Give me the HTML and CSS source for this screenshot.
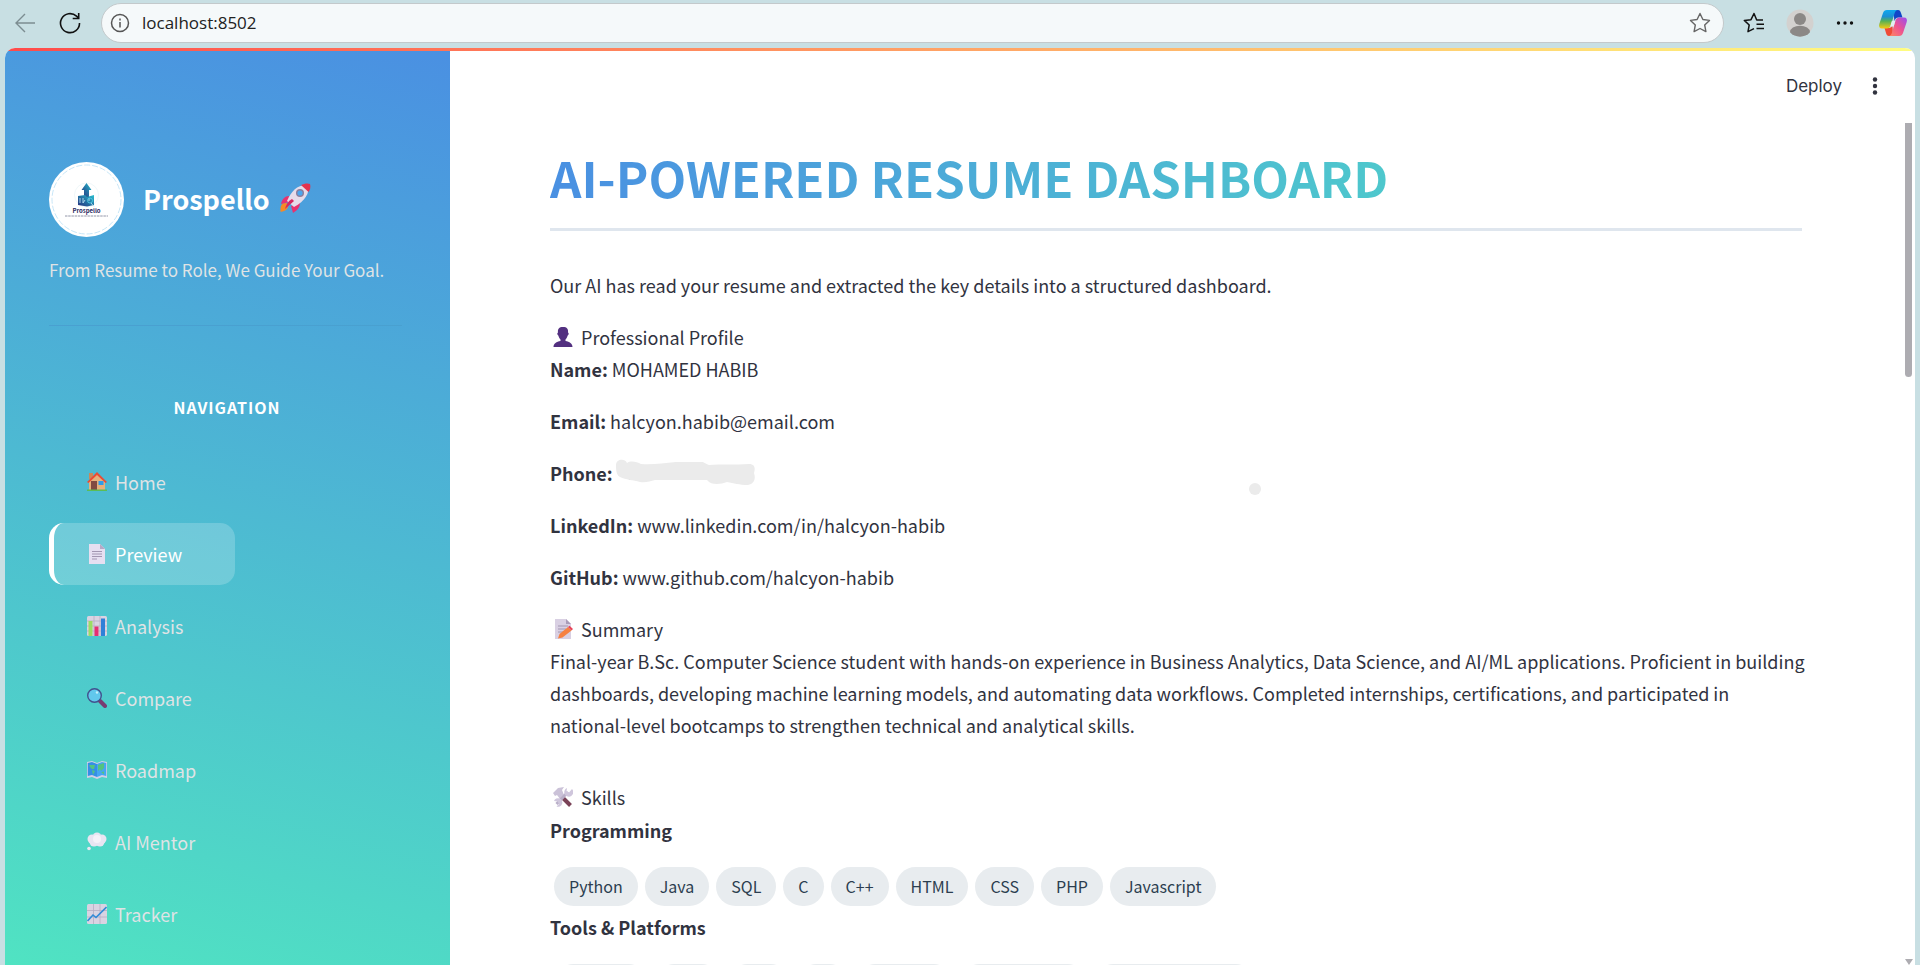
FILE: index.html
```html
<!DOCTYPE html>
<html lang="en">
<head>
<meta charset="utf-8">
<title>Prospello</title>
<link rel="stylesheet" href="styles.css">
</head>
<body>
<div class="browser-bar">
  <button class="tool" type="button" aria-label="Back">
    <svg width="22" height="22" viewBox="0 0 22 22" fill="none" stroke="#7c8d91" stroke-width="1.4"><path d="M21 11H2M11 2L2 11l9 9"/></svg>
  </button>
  <button class="tool" type="button" aria-label="Refresh">
    <svg width="22" height="22" viewBox="0 0 22 22" fill="none" stroke="#111" stroke-width="1.6"><path d="M20.5 11A9.5 9.5 0 1 1 17.5 4.200L19.500 6M19.700 1v5.500h-6"/></svg>
  </button>
  <div class="address">
    <svg width="20" height="20" viewBox="0 0 20 20" fill="none" stroke="#555" stroke-width="1.5"><circle cx="10" cy="10" r="8.500"/><path d="M10 9v5.500M10 5.500v2"/></svg>
    <input class="address-input" type="text" aria-label="Address" value="localhost:8502">
    <button class="star" type="button" aria-label="Add to favorites">
      <svg width="22" height="22" viewBox="0 0 22 22" fill="none" stroke="#666" stroke-width="1.400" stroke-linejoin="round"><path d="M11 1.500l2.900 6 6.600.900-4.800 4.600 1.200 6.600-5.900-3.100-5.900 3.100 1.200-6.600L1.500 8.400l6.600-.9z"/></svg>
    </button>
  </div>
  <div class="browser-tools">
    <button class="tool" type="button" aria-label="Favorites">
      <svg width="22" height="22" viewBox="0 0 22 22" fill="none" stroke="#111" stroke-width="1.500" stroke-linejoin="round"><path d="M20 8h-6.300L11 1.500 8 7.700l-6.700.7 4.900 4.600L5 19.700l6-3M13.500 12.300H21M13.500 16.500H21"/></svg>
    </button>
    <button class="tool" type="button" aria-label="Account">
      <svg width="28" height="28" viewBox="0 0 28 28"><circle cx="14" cy="14" r="13.500" fill="#d3d1cf"/><circle cx="14" cy="10" r="6" fill="#8b8886"/><path d="M4 23.200a10 6.500 0 0 1 20 0 13.500 13.500 0 0 1-20 0z" fill="#8b8886"/></svg>
    </button>
    <button class="tool" type="button" aria-label="Settings">
      <svg width="20" height="20" viewBox="0 0 20 20" fill="#111"><circle cx="3.500" cy="10" r="1.700"/><circle cx="10" cy="10" r="1.700"/><circle cx="16.500" cy="10" r="1.700"/></svg>
    </button>
    <button class="tool" type="button" aria-label="Copilot">
      <svg width="30" height="28" viewBox="0 0 30 28">
        <defs>
          <linearGradient id="cpA" x1="0" y1="0" x2="0" y2="1"><stop offset="0" stop-color="#0fa8ee"/><stop offset=".35" stop-color="#1d8fd4"/><stop offset=".6" stop-color="#56b155"/><stop offset="1" stop-color="#f6cb12"/></linearGradient>
          <linearGradient id="cpB" x1="1" y1="0" x2="0" y2="1"><stop offset="0" stop-color="#9a4df0"/><stop offset=".5" stop-color="#ee5390"/><stop offset="1" stop-color="#ff8a5c"/></linearGradient>
        </defs>
        <path d="M15 1h5c2 0 2.500 1.500 3 3l1.500 4.500h-4c-2.500 0-3.300 1.500-4 3.500z" fill="#1145c8"/>
        <path d="M15 27h-4c-2 0-2.600-1.500-3-3l-1.500-5h4c2.500 0 3.500-1.500 4-3z" fill="#ef4b36"/>
        <path d="M9 1h11c-2 0-2.800 1.200-3.500 3.500L13 16c-.7 2.300-2 3.500-4.500 3.500H4c-2.500 0-3.500-2-2.700-4.500L5 4c.7-2 1.800-3 4-3z" fill="url(#cpA)"/>
        <path d="M21 27H10.500c2 0 2.800-1.200 3.500-3.500L17.300 12c.7-2.300 2-3.500 4.500-3.500H26c2.500 0 3.500 2 2.700 4.500L25 24c-.7 2-1.800 3-4 3z" fill="url(#cpB)"/>
        <path d="M13.800 12h3.500l-1.600 5.500h-3.500z" fill="#e3eef2"/>
      </svg>
    </button>
  </div>
</div>

<div class="app">
  <div class="decoration"></div>
  <div class="columns">
    <aside class="sidebar">
      <div class="brand">
        <svg class="brand-logo" viewBox="0 0 75 75" role="img" aria-label="Prospello logo">
          <circle cx="37.500" cy="37.500" r="37.500" fill="#fff"/>
          <circle cx="37.500" cy="37.500" r="34.500" fill="none" stroke="#b9dff5" stroke-width=".800" stroke-dasharray="6 2"/>
          <defs><linearGradient id="lg" x1="0" y1="1" x2="1" y2="0"><stop offset="0" stop-color="#29327f"/><stop offset=".5" stop-color="#2374a5"/><stop offset="1" stop-color="#2ac0d0"/></linearGradient></defs>
          <circle cx="37.500" cy="33" r="12" fill="none" stroke="#e5f2f5" stroke-width=".600"/>
          <path d="M37.500 21l5 7h-2.500v7h-5v-7h-2.500z" fill="url(#lg)"/>
          <path d="M29 34l7-1 2 2 7-2v10l-7 1.500-9-1.500z" fill="url(#lg)"/>
          <path d="M31 36v5M34 36v5l2-3M40 36v3M42 41l3 3.500" stroke="#b8dcf0" stroke-width=".900" fill="none"/>
          <circle cx="41" cy="38.500" r="2.500" fill="none" stroke="#4fc3df" stroke-width="1"/>
          <text x="37.500" y="51" text-anchor="middle" class="logo-name">Prospello</text>
          <path d="M16 54h43" stroke="#777b92" stroke-width=".800" stroke-dasharray="2.500 .7"/>
        </svg>
        <h2 class="brand-name">Prospello</h2>
        <svg class="rocket" width="32" height="32" viewBox="0 0 32 32">
          <path d="M2 24c1-3 4-4 7-2 1 3-1 6-4 7-2 .8-3.500.8-3.500.8S1.300 26 2 24z" fill="#f58a25"/>
          <path d="M10 14c-4 0-7 3-8 8l8-2zM21 20c0 5-2 8-7 11l-2-7z" fill="#e8326f"/>
          <path d="M29 3c2 8-3 16-14 22l-7-6C12 9 19 2 29 3z" fill="#e6dcea"/>
          <path d="M22 3c3-1.500 7-2 9-1 1 3 0 6-1.500 8z" fill="#e5334e"/>
          <path d="M13 17l2 2-9 8c1-4 3-8 7-10z" fill="#d52862"/>
          <circle cx="21" cy="11" r="4" fill="#8b7d9c"/><circle cx="21" cy="11" r="2.600" fill="#4ba6ee"/>
        </svg>
      </div>
      <p class="tagline">From Resume to Role, We Guide Your Goal.</p>
      <hr class="side-rule">
      <h3 class="nav-title">NAVIGATION</h3>
      <nav class="nav">
        <a class="nav-item" href="#home">
          <svg class="emoji" viewBox="0 0 20 20"><path d="M2 1h4v6H2z" fill="#c98a5c"/><path d="M2 9l8-7 8 7v9H2z" fill="#e6b07c"/><path d="M0 10L10 0l10 10-1.500 1L10 3l-8.500 8z" fill="#ea4c35"/><path d="M4 9h6v9H4z" fill="#824a41"/><path d="M11.500 9h5v4h-5z" fill="#2e9cea"/><path d="M0 17.500h20V19H0z" fill="#5bbd55"/></svg>
          Home</a>
        <a class="nav-item active" href="#preview" aria-current="page">
          <svg class="emoji" viewBox="0 0 20 20"><path d="M2 0h11l5 5v15H2z" fill="#e6dff1"/><path d="M13 0l5 5h-5z" fill="#b6a9c6"/><path d="M5 7.500h10M5 10h10M5 12.500h10M5 15h5" stroke="#a296b1"/></svg>
          Preview</a>
        <a class="nav-item" href="#analysis">
          <svg class="emoji" viewBox="0 0 20 20"><rect width="20" height="20" rx="1.500" fill="#d9d3e2"/><path d="M0 5h20M0 10h20M0 15h20M7 0v20M13 0v20" stroke="#b6adc3" stroke-width=".800"/><path d="M1.500 5h4v15h-4z" fill="#9bdc64"/><path d="M7.500 10.500h4V20h-4z" fill="#e62f72"/><path d="M14 2.500h4V20h-4z" fill="#2f80d8"/></svg>
          Analysis</a>
        <a class="nav-item" href="#compare">
          <svg class="emoji" viewBox="0 0 20 20"><path d="M13 13l5 5" stroke="#793b72" stroke-width="4" stroke-linecap="round"/><circle cx="7.500" cy="7.500" r="6.800" fill="#62c8ec" stroke="#42518d" stroke-width="1.400"/><circle cx="10" cy="4.500" r="1.200" fill="#c4f0fb"/></svg>
          Compare</a>
        <a class="nav-item" href="#roadmap">
          <svg class="emoji" viewBox="0 0 20 20"><path d="M0 2l5-1 5 2 5-2 5 1v16l-5-1-5 2-5-2-5 1z" fill="#d2cfe6"/><path d="M.800 3L5 2l5 2v13l-5-2-4.200 1z" fill="#358fe5"/><path d="M10 4l5-2 4.200 1v13L15 15l-5 2z" fill="#45a6f2"/><path d="M2 5l6 0-1 4-2 0-2-2zM5 10l3 1-2 4zM11 5l6-2v5l-3 3-1-2-2 2zM14 12l3-.5v3z" fill="#52c480"/></svg>
          Roadmap</a>
        <a class="nav-item" href="#mentor">
          <svg class="emoji" viewBox="0 0 20 20" fill="#e9e5f2"><circle cx="5" cy="7" r="4.500"/><circle cx="15" cy="7" r="4.500"/><circle cx="10" cy="5" r="4.500"/><circle cx="7" cy="10" r="4.500"/><circle cx="13" cy="10" r="4.500"/><circle cx="2" cy="16.500" r="1.800"/><circle cx="10" cy="7" r="4" fill="#f5f2f9"/></svg>
          AI Mentor</a>
        <a class="nav-item" href="#tracker">
          <svg class="emoji" viewBox="0 0 20 20"><rect width="20" height="20" rx="1.500" fill="#d9d3e2"/><path d="M0 6.500h20M0 13h20M6.500 0v20M13 0v20" stroke="#b6adc3" stroke-width=".800"/><path d="M.500 17L6 11l3 2.500L19.500 3" stroke="#318ad7" stroke-width="1.600" fill="none"/></svg>
          Tracker</a>
      </nav>
    </aside>

    <main class="main">
      <header class="app-header">
        <button class="deploy" type="button">Deploy</button>
        <button class="menu" type="button" aria-label="Main menu">
          <svg width="6" height="20" viewBox="0 0 6 20" fill="#31333f"><circle cx="3" cy="3.500" r="2.200"/><circle cx="3" cy="10" r="2.200"/><circle cx="3" cy="16.500" r="2.200"/></svg>
        </button>
      </header>
      <div class="content">
        <h1 class="title">AI-POWERED RESUME DASHBOARD</h1>
        <p class="para">Our AI has read your resume and extracted the key details into a structured dashboard.</p>
        <h2 class="section">
          <svg class="emoji" viewBox="0 0 20 20"><path d="M10 0c4 0 5.500 2 5 5.500 1 0 1 2.500-.3 3C14 11 13 12 12.500 12.500V14c4 .8 7 2.500 7 6H.5c0-3.500 3-5.200 7-6v-1.500C7 12 6 11 5.300 8.500 4 8 4 5.500 5 5.500 4.500 2 6 0 10 0z" fill="#533080"/></svg>
          Professional Profile</h2>
        <p class="para"><strong>Name:</strong> MOHAMED HABIB</p>
        <p class="para"><strong>Email:</strong> halcyon.habib@email.com</p>
        <p class="para phone"><strong>Phone:</strong>
          <svg width="142" height="28" viewBox="0 0 142 28"><path d="M4 16l2 1M14 20h3M38 20h4" stroke="#555" stroke-width="1.200"/><path d="M1 6C1 0 10-1 12 4c4-3 10-1 14 1 12 1 22-1 35-2h25c4 0 4 2 8 3 12-1 25 0 40-1 7 0 6 6 5 9 2 6 0 11-6 12-9 0-14-2-21-3-6 2-15 4-20-2H40c-5 1-9 3-15 2-7-2-14-2-20-5-4-2-4-8-4-12z" fill="#ebebeb"/></svg>
        </p>
        <p class="para"><strong>LinkedIn:</strong> www.linkedin.com/in/halcyon-habib</p>
        <p class="para"><strong>GitHub:</strong> www.github.com/halcyon-habib</p>
        <h2 class="section">
          <svg class="emoji" viewBox="0 0 20 20"><path d="M2 0h11l5 5v15H2z" fill="#d9d0e3"/><path d="M13 0l5 5h-5z" fill="#a99cb8"/><path d="M5 7h10M5 10h8M5 13h5" stroke="#a296b1"/><path d="M5 19.500l1.500-4.500L15 8l3.500 3.500-9 7z" fill="#f68142"/><path d="M15 8l1.500-1.200L20 10l-1.500 1.500z" fill="#e8455a"/></svg>
          Summary</h2>
        <p class="para summary">Final-year B.Sc. Computer Science student with hands-on experience in Business Analytics, Data Science, and AI/ML applications. Proficient in building dashboards, developing machine learning models, and automating data workflows. Completed internships, certifications, and participated in <span class="keep">national-level</span> bootcamps to strengthen technical and analytical skills.</p>
        <h2 class="section">
          <svg class="emoji" viewBox="0 0 20 20"><path d="M9 10l8.500 8.500" stroke="#7a4257" stroke-width="4"/><path d="M0 6l5-5 6-1-2 3 2 5-4 4-3-4-2 1z" fill="#cbc2d8"/><path d="M3.500 17L15 5" stroke="#b9afc8" stroke-width="3"/><path d="M19 2a4.500 4.500 0 1 1-5-1l-.5 3.500 2.500 1zM1 14a4.300 4.300 0 1 1 2.500 5.500L6 17l-1.500-2.500z" fill="#cfc6dc"/></svg>
          Skills</h2>
        <h3 class="group">Programming</h3>
        <ul class="chips">
          <li class="chip">Python</li><li class="chip">Java</li><li class="chip">SQL</li><li class="chip">C</li><li class="chip">C++</li><li class="chip">HTML</li><li class="chip">CSS</li><li class="chip">PHP</li><li class="chip">Javascript</li>
        </ul>
        <h3 class="group">Tools &amp; Platforms</h3>
        <ul class="chips">
          <li class="chip" style="width:94px"></li><li class="chip" style="width:66px"></li><li class="chip" style="width:62px"></li><li class="chip" style="width:52px"></li><li class="chip" style="width:97px"></li><li class="chip" style="width:127px"></li><li class="chip" style="width:161px"></li>
        </ul>
      </div>
      <span class="smudge"></span>
      <div class="scroll-thumb"></div>
      <div class="scroll-arrow"></div>
    </main>
  </div>
</div>
</body>
</html>
```
FILE: styles.css
```css
* { box-sizing: border-box; }

body {
  margin: 0;
  height: 100vh;
  display: flex;
  flex-direction: column;
  overflow: hidden;
  background: #c8dfe3;
  color: #31333f;
  font-family: "Noto Sans CJK SC", "Noto Sans", sans-serif;
  font-size: 18px;
  line-height: 32px;
}

h1, h2, h3, p, ul { margin: 0; padding: 0; }
button { border: 0; padding: 0; background: none; font: inherit; color: inherit; cursor: pointer; }
svg { display: block; flex: none; }

/* Browser toolbar */
.browser-bar {
  flex: none;
  height: 48px;
  padding: 0 12px 2px 14px;
  display: flex;
  align-items: center;
  gap: 23px;
}
.address {
  flex: 1;
  height: 40px;
  margin-left: -3px;
  padding: 0 12px 0 8px;
  display: flex;
  align-items: center;
  gap: 12px;
  border: 1px solid #c3c9cb;
  border-radius: 20px;
  background: #f5f9fa;
}
.address-input {
  flex: 1;
  min-width: 0;
  border: 0;
  padding: 0;
  outline: 0;
  background: none;
  color: #222;
  font: 17px/24px "Open Sans", sans-serif;
}
.browser-tools { display: flex; align-items: center; gap: 21px; margin-left: -4px; }
.browser-tools .tool:last-child { margin-left: 2px; }

/* App frame */
.app {
  flex: 1;
  min-height: 0;
  margin: 0 5px;
  display: flex;
  flex-direction: column;
  border-radius: 10px 10px 0 0;
  overflow: hidden;
  background: #fff;
}
.decoration { flex: none; height: 3px; background: linear-gradient(90deg, #ff4b4b, #fffd80); }
.columns { flex: 1; min-height: 0; display: flex; }

/* Sidebar */
.sidebar {
  flex: none;
  width: 445px;
  padding: 111px 48px 0 44px;
  overflow: hidden;
  background: linear-gradient(195deg, #4a90e2, #50e3c2);
  color: #dfe3e5;
}
.brand { display: flex; align-items: center; }
.brand-logo { width: 75px; height: 75px; }
.logo-name { font: bold 6px "Noto Sans CJK SC", sans-serif; fill: #29285e; }
.brand-name { margin-left: 19px; padding-bottom: 2px; color: #fff; font-size: 27px; font-weight: 700; line-height: 40px; }
.rocket { margin: 0 0 4px 9px; }
.tagline { margin-top: 17px; font-size: 17px; white-space: nowrap; }
.side-rule { height: 1px; margin: 39px 0 65px; border: 0; background: #49a0d0; }
.nav-title {
  padding-left: 3px;
  color: #fff;
  font-size: 16px;
  font-weight: 700;
  letter-spacing: 1px;
  text-align: center;
}
.nav { margin-top: 28px; display: flex; flex-direction: column; align-items: flex-start; gap: 10px; }
.nav-item {
  height: 62px;
  padding: 0 53px 1px 33px;
  display: flex;
  align-items: center;
  gap: 8px;
  border-left: 5px solid transparent;
  border-radius: 15px;
  color: inherit;
  text-decoration: none;
}
.nav-item.active { border-left-color: #fff; background: rgba(255, 255, 255, 0.2); color: #fff; }
.emoji { width: 20px; height: 20px; }

/* Main area */
.main { flex: 1; min-width: 0; position: relative; overflow: hidden; }
.app-header { height: 70px; padding-right: 37px; display: flex; align-items: center; justify-content: flex-end; gap: 30px; }
.deploy { font: 17px/24px Inter, sans-serif; }
.content { padding: 26px 113px 0 100px; }
.title {
  margin-bottom: 38px;
  padding-bottom: 21px;
  border-bottom: 3px solid #dfe6ee;
  background: linear-gradient(90deg, #4a90e2, #50e3c2);
  background-clip: text;
  -webkit-background-clip: text;
  color: transparent;
  font-size: 49px;
  font-weight: 700;
  line-height: 60px;
}
.para { margin-bottom: 20px; }
.para strong, .group { font-size: 18px; font-weight: 700; }
.phone { display: flex; align-items: center; gap: 2px; }
.section { padding-left: 3px; display: flex; align-items: center; gap: 8px; font-size: 18px; font-weight: 400; }
.summary { margin: 0 -8px 40px 0; }
.keep { white-space: nowrap; }
.group { margin: 1px 0 21px; }
.chips { margin: 0 4px 5px; display: flex; flex-wrap: wrap; gap: 7px; list-style: none; }
.chip {
  height: 39px;
  padding: 0 15px;
  border-radius: 20px;
  background: #e8ecef;
  color: #2c3e50;
  font-size: 16px;
  font-weight: 400;
  line-height: 38px;
}

/* Overlays */
.smudge { position: absolute; left: 799px; top: 432px; width: 12px; height: 12px; border-radius: 50%; background: #ebebeb; }
.scroll-thumb { position: absolute; right: 3px; top: 72px; width: 7px; height: 254px; border-radius: 0 0 4px 4px; background: #adacb1; }
.scroll-arrow { position: absolute; right: 2px; bottom: 0; border: 4px solid transparent; border-top: 6px solid #adacb1; border-bottom: 0; }
```
